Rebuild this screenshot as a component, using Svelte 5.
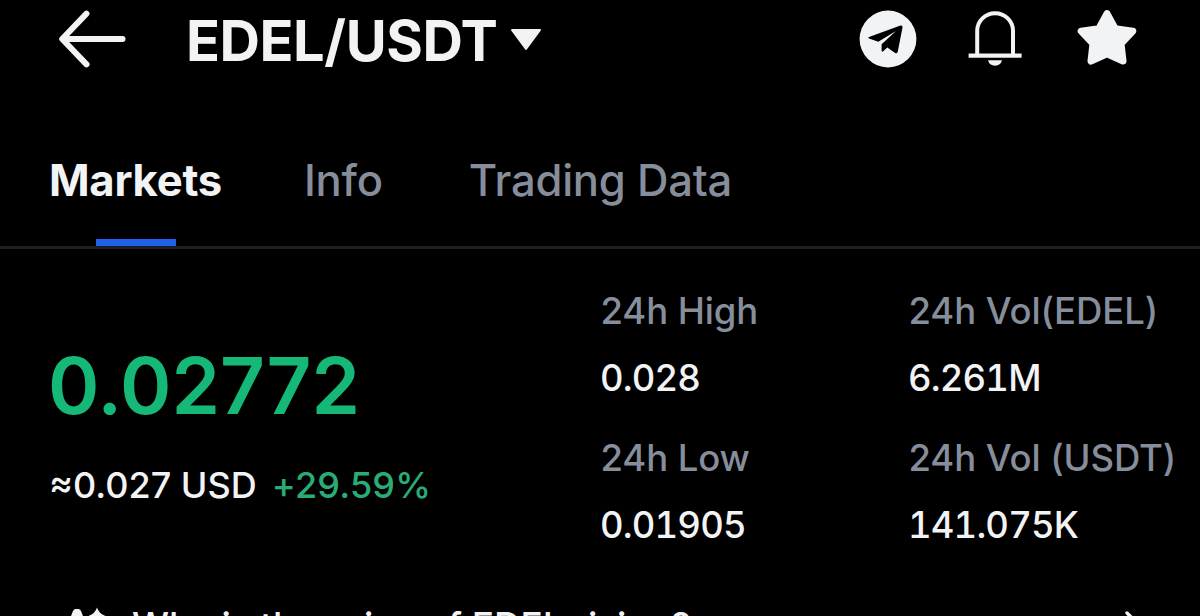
<script>
  const tabs = ['Markets', 'Info', 'Trading Data'];
  let active = $state('Markets');

  const stats = [
    { label: '24h High', value: '0.028' },
    { label: '24h Vol(EDEL)', value: '6.261M' },
    { label: '24h Low', value: '0.01905' },
    { label: '24h Vol (USDT)', value: '141.075K' }
  ];
</script>

<main class="screen">
  <header class="topbar">
    <svg class="back" width="68" height="58" viewBox="0 0 68 58" aria-hidden="true">
      <path d="M28.5 3.6 L4.2 29 L28.5 54.4 M5 29 H64.5" fill="none" stroke="#f2f3f5" stroke-width="6" stroke-linecap="round" stroke-linejoin="round" />
    </svg>
    <h1 class="pair">EDEL/USDT</h1>
    <svg class="caret" width="32" height="22" viewBox="0 0 32 22" aria-hidden="true">
      <path d="M2 1 H30 L16 20 Z" fill="#f2f3f5" stroke="#f2f3f5" stroke-width="2" stroke-linejoin="round" />
    </svg>
    <div class="actions">
      <svg width="58" height="58" viewBox="0 0 58 58" aria-hidden="true">
        <circle cx="29" cy="29" r="28.4" fill="#f2f3f5" />
        <path d="M10 27 L41.5 15.5 Q43.8 15 43.5 17.5 L38.8 41.5 Q38.3 44.2 35.8 42.7 L28.3 37.4 L24.2 41.2 Q22.7 42.4 22.6 40.5 L22.6 34.3 L37 21 L19.3 31.8 L10 28.6 Q8.6 27.7 10 27 Z" fill="#000" />
      </svg>
      <svg width="54" height="58" viewBox="0 0 54 58" aria-hidden="true">
        <path d="M9.2 44.5 V20.8 A17.9 17.6 0 0 1 45 20.8 V44.5" fill="none" stroke="#f2f3f5" stroke-width="4" />
        <path d="M.6 45.6 H53.6" stroke="#f2f3f5" stroke-width="4.2" />
        <path d="M20 50.3 H34 A7.2 7 0 0 1 20 50.3 Z" fill="#f2f3f5" />
      </svg>
      <svg width="60" height="58" viewBox="0 0 60 58" aria-hidden="true">
        <path d="M30 3.6 L38.2 18.6 L55.8 21.1 L44 33.7 L46 51 L30 43.8 L14 51 L16 33.7 L4.2 21.1 L21.8 18.6 Z" fill="#f2f3f5" stroke="#f2f3f5" stroke-width="7" stroke-linejoin="round" />
      </svg>
    </div>
  </header>

  <nav class="tabs">
    {#each tabs as tab}
      <button class="tab" class:active={active === tab} onclick={() => (active = tab)}>{tab}</button>
    {/each}
  </nav>

  <section class="ticker">
    <div class="quote">
      <div class="price">0.02772</div>
      <div class="sub">
        <span class="fiat">≈0.027 USD</span>
        <span class="change">+29.59%</span>
      </div>
    </div>
    <dl class="stats">
      {#each stats as stat}
        <div class="stat">
          <dt>{stat.label}</dt>
          <dd>{stat.value}</dd>
        </div>
      {/each}
    </dl>
  </section>

  <footer class="ask">
    <svg class="spark" width="44" height="40" viewBox="0 0 44 40" aria-hidden="true">
      <path d="M7 5 Q7.8 3 9.8 3 H12.2 Q14.2 3 15 5 L28 38 H-6 Z" fill="#f2f3f5" />
      <path d="M31 1.5 Q32.8 7.5 39.5 10 Q32.8 12.5 31 18.5 Q29.2 12.5 22.5 10 Q29.2 7.5 31 1.5 Z" fill="#f2f3f5" stroke="#000" stroke-width="3" paint-order="stroke" />
    </svg>
    <span class="question">Why is the price of EDEL rising?</span>
    <svg class="chevron" width="22" height="40" viewBox="0 0 22 40" aria-hidden="true">
      <path d="M3 7 L18 22 L3 37" fill="none" stroke="#f2f3f5" stroke-width="3.4" stroke-linecap="round" />
    </svg>
  </footer>
</main>

<style>
  :global(body) {
    margin: 0;
    background: #000;
  }

  .screen {
    width: 1200px;
    height: 616px;
    overflow: hidden;
    display: flex;
    flex-direction: column;
    background: #000;
    color: #f2f3f5;
    font-family: Inter, sans-serif;
  }

  svg {
    display: block;
    flex: none;
  }

  .topbar {
    flex: none;
    height: 80px;
    box-sizing: border-box;
    padding: 0 63px 2px 58px;
    display: flex;
    align-items: center;
  }

  .pair {
    margin: 3px 0 0 60px;
    width: 312px;
    font-size: 56px;
    line-height: 80px;
    font-weight: 700;
    letter-spacing: -0.45px;
    white-space: nowrap;
  }

  .caret {
    margin: 2px 0 0 12px;
  }

  .actions {
    margin-left: auto;
    display: flex;
    gap: 51px;
    align-items: center;
  }

  .actions svg:last-child {
    margin-left: 4px;
  }

  .tabs {
    flex: none;
    height: 169px;
    box-sizing: border-box;
    padding: 34px 0 0 49px;
    border-bottom: 3px solid #1d1e23;
    display: flex;
    gap: 82px;
  }

  .tab {
    position: relative;
    height: 132px;
    padding: 0 0 1px;
    border: 0;
    background: none;
    color: #868d9b;
    font: 500 43.6px/133px Inter, sans-serif;
    letter-spacing: -0.25px;
    display: flex;
    align-items: flex-start;
    white-space: nowrap;
  }

  .tab:last-child {
    margin-left: 4px;
  }

  .tab.active {
    color: #f2f3f5;
    font-weight: 700;
  }

  .tab.active::after {
    content: '';
    position: absolute;
    left: calc(50% - 39px);
    bottom: 0;
    width: 80px;
    height: 7px;
    background: #2160e8;
  }

  .ticker {
    flex: none;
    height: 336px;
    display: flex;
    padding-left: 49px;
  }

  .quote {
    width: 552px;
    padding-top: 87px;
  }

  .price {
    margin-left: -1px;
    color: #15b877;
    font-size: 78px;
    line-height: 100px;
    font-weight: 600;
  }

  .sub {
    margin-top: 25px;
    display: flex;
    gap: 15px;
    font-size: 36px;
    line-height: 48px;
    font-weight: 500;
    white-space: nowrap;
  }

  .change {
    color: #2aad75;
    letter-spacing: 0.2px;
  }

  .stats {
    margin: 0;
    padding-top: 38px;
    display: grid;
    grid-template-columns: 308px 290px;
    grid-template-rows: 147px 147px;
    white-space: nowrap;
  }

  .stat {
    font-size: 36.5px;
    font-weight: 500;
  }

  dt {
    margin-left: -0.5px;
    color: #868d9b;
    line-height: 49px;
    letter-spacing: -0.1px;
  }

  dd {
    margin: 18px 0 0 -1px;
    line-height: 49px;
    font-variant-numeric: tabular-nums;
    letter-spacing: -0.85px;
  }

  .ask {
    flex: none;
    height: 82px;
    padding: 0 54px 0 66px;
    display: flex;
    align-items: center;
  }

  .question {
    margin-left: 22px;
    font-size: 37px;
    font-weight: 500;
    line-height: 48px;
    letter-spacing: -0.1px;
    white-space: nowrap;
  }

  .chevron {
    margin-left: auto;
  }
</style>
